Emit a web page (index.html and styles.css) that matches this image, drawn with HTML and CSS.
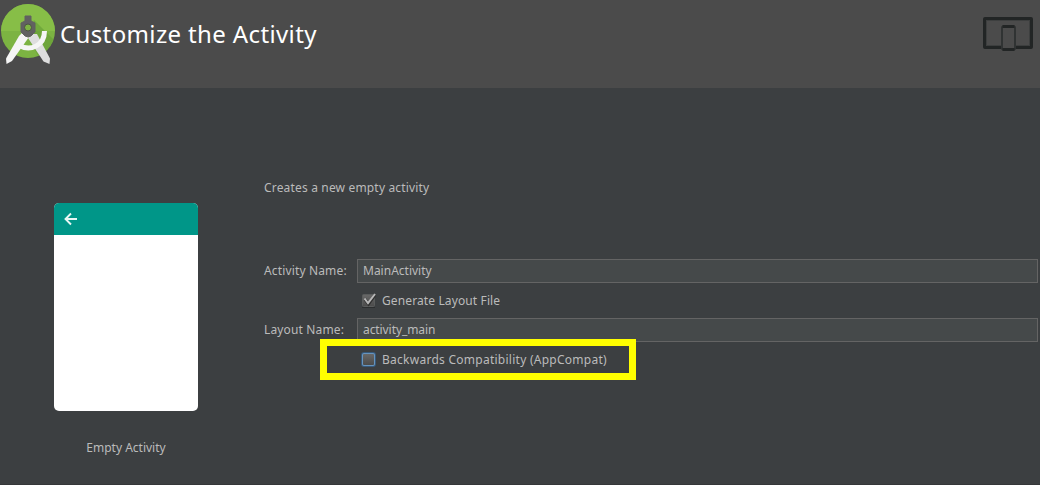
FILE: index.html
```html
<!DOCTYPE html>
<html lang="en">
<head>
<meta charset="utf-8">
<title>Customize the Activity</title>
<link rel="stylesheet" href="styles.css">
</head>
<body>
<div class="wizard">
  <header class="header">
    <svg class="logo" width="56" height="66" viewBox="0 0 56 66">
      <defs><clipPath id="disc"><circle cx="28" cy="31" r="27"/></clipPath></defs>
      <g clip-path="url(#disc)">
        <rect width="56" height="66" fill="#7cb342"/>
        <rect width="56" height="31" fill="#8bc34a" opacity=".7"/>
        <path d="M34 20L56 42V66H44L28 38Z" fill="#689f38" opacity=".7"/>
      </g>
      <path d="M33 34L28 38L43.500 61.500L49.500 64L50 58.500L37 34Z" fill="#dedede"/>
      <path d="M22 33L29 37L12 61L6.500 64L6 58.500L19 36Z" fill="#f5f5f5"/>
      <path d="M19.500 45.500C30 51.500 44.500 46 44.500 31" fill="none" stroke="#f5f5f5" stroke-width="5"/>
      <path d="M25 16h6v5l4 2v9l-4 4-3 1-3-1-4-4v-9l4-2z" fill="#616161" stroke="#616161"/>
      <circle cx="28" cy="27.500" r="3.500" fill="#7cb342" stroke="#4b5344"/>
    </svg>
    <h1 class="title">Customize the Activity</h1>
    <svg class="devices" width="52" height="37" viewBox="0 0 52 37">
      <rect x="2.500" y="3.500" width="47" height="29" rx=".5" fill="none" stroke="#222525" stroke-width="3"/>
      <rect x="4.500" y="5.500" width="43" height="25" fill="none" stroke="#3d3f3f"/>
      <rect x="20" y="11.500" width="13" height="23" rx="1" fill="#4b4b4b" stroke="#303333" stroke-width="2"/>
      <path d="M20.500 11.500h12M20.500 34.500h12" stroke="#222525" stroke-width="3"/>
    </svg>
  </header>
  <main class="content">
    <section class="preview">
      <div class="phone">
        <div class="appbar">
          <svg width="14" height="14" viewBox="0 0 14 14"><path d="M14 7H2.500M8 1.500L2.500 7l5.500 5.500" fill="none" stroke="#e8f6f4" stroke-width="1.900"/></svg>
        </div>
      </div>
      <p class="caption">Empty Activity</p>
    </section>
    <section class="form">
      <p class="description">Creates a new empty activity</p>
      <div class="row">
        <span class="label">Activity Name:</span>
        <div class="field"><span>MainActivity</span></div>
      </div>
      <div class="check-row">
        <svg width="16" height="16" viewBox="0 0 16 16">
          <defs><linearGradient id="box" x2="0" y2="1"><stop stop-color="#686868"/><stop offset="1" stop-color="#4b4b4b"/></linearGradient></defs>
          <rect x="2.500" y="1.500" width="12" height="12" rx="1" fill="url(#box)" stroke="#5a5c5c"/>
          <path d="M2 14.500h13" stroke="#2c2e2f"/>
          <path d="M5 6.500l3.500 4.500L15 2" fill="none" stroke="#303030" stroke-width="3"/>
          <path d="M4.500 5.500l3.500 4.500L15 1" fill="none" stroke="#b8b8b8" stroke-width="2"/>
        </svg>
        <span class="generate-label">Generate Layout File</span>
      </div>
      <div class="row">
        <span class="label">Layout Name:</span>
        <div class="field"><span class="layout-value">activity_main</span></div>
      </div>
      <div class="check-row">
        <svg width="16" height="16" viewBox="0 0 16 16">
          <rect x="1" y="0" width="15" height="15" rx="3" fill="#36597c"/>
          <rect x="2" y="1" width="13" height="13" rx="2" fill="#6794bd"/>
          <rect x="3" y="2" width="11" height="11" rx="1" fill="url(#box)"/>
        </svg>
        <span class="compat-label">Backwards Compatibility (AppCompat)</span>
      </div>
    </section>
  </main>
  <div class="highlight"></div>
</div>
</body>
</html>
```
FILE: styles.css
```css
* { box-sizing: border-box; }
body { margin: 0; }
.wizard {
  position: relative;
  display: flex;
  flex-direction: column;
  width: 1040px;
  height: 485px;
  overflow: hidden;
  background: #3c3f41;
  border-bottom: 1px solid #353739;
  color: #bbb;
  font: 12px/16px "Noto Sans", sans-serif;
  white-space: nowrap;
}
.header { display: flex; height: 88px; background: #4b4b4b; }
.logo { flex: none; }
.title { margin: 16px 0 0 4px; color: #fff; font-size: 24px; line-height: 36px; font-weight: 400; letter-spacing: .37px; }
.devices { margin: 15px 6px 0 auto; }
.content { display: grid; grid-template-columns: 144px 1fr; column-gap: 66px; padding: 0 2px 0 54px; }
.preview { padding-top: 115px; }
.phone { height: 208px; overflow: hidden; border-radius: 5px; background: #fff; }
.appbar { display: flex; align-items: center; height: 32px; padding-left: 9px; background: #009688; }
.caption { margin: 29px 0 0; text-align: center; }
.form { padding-top: 92px; }
.description { margin: 0 0 63px; letter-spacing: .17px; }
.row { display: grid; grid-template-columns: 93px 1fr; align-items: center; height: 24px; }
.label { letter-spacing: .15px; }
.field { display: flex; align-items: center; height: 24px; padding-left: 5px; border: 1px solid #646464; background: #45494a; }
.layout-value { letter-spacing: -.08px; }
.check-row { display: flex; align-items: center; gap: 6px; height: 35px; padding-left: 96px; }
.generate-label { letter-spacing: .12px; }
.compat-label { letter-spacing: .26px; }
.highlight { position: absolute; left: 320px; top: 339px; width: 316px; height: 41px; border: 7px solid #ff0; }
```
